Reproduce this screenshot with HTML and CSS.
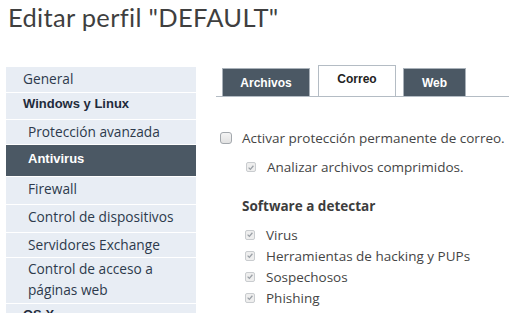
FILE: index.html
```html
<!DOCTYPE html>
<html lang="es">
<head>
<meta charset="utf-8">
<link rel="stylesheet" href="styles.css">
</head>
<body>
<h1 class="title">Editar perfil "DEFAULT"</h1>
<div class="layout">
  <nav class="side">
    <div class="item h25">General</div>
    <div class="item group h26">Windows y Linux</div>
    <div class="item sub h24">Protección avanzada</div>
    <div class="item sub active">Antivirus</div>
    <div class="item sub h27">Firewall</div>
    <div class="item sub h27">Control de dispositivos</div>
    <div class="item sub h24">Servidores Exchange</div>
    <div class="item sub two">Control de acceso a páginas web</div>
    <div class="item group h26">OS X</div>
  </nav>
  <main class="content">
    <div class="tabs">
      <div class="tab t1">Archivos</div>
      <div class="tab t2 on">Correo</div>
      <div class="tab t3">Web</div>
    </div>
    <div class="opts">
      <div class="row main"><span class="box"></span><span>Activar protección permanente de correo.</span></div>
      <div class="row nested"><span class="box dis"><svg viewBox="0 0 10 10"><path d="M2 5.2 L4.2 7.4 L8 2.8" fill="none" stroke="#9aa0a6" stroke-width="1.6"/></svg></span><span>Analizar archivos comprimidos.</span></div>
      <h2 class="head">Software a detectar</h2>
      <div class="list">
        <div class="row"><span class="box dis"><svg viewBox="0 0 10 10"><path d="M2 5.2 L4.2 7.4 L8 2.8" fill="none" stroke="#9aa0a6" stroke-width="1.6"/></svg></span><span>Virus</span></div>
        <div class="row"><span class="box dis"><svg viewBox="0 0 10 10"><path d="M2 5.2 L4.2 7.4 L8 2.8" fill="none" stroke="#9aa0a6" stroke-width="1.6"/></svg></span><span>Herramientas de hacking y PUPs</span></div>
        <div class="row"><span class="box dis"><svg viewBox="0 0 10 10"><path d="M2 5.2 L4.2 7.4 L8 2.8" fill="none" stroke="#9aa0a6" stroke-width="1.6"/></svg></span><span>Sospechosos</span></div>
        <div class="row"><span class="box dis"><svg viewBox="0 0 10 10"><path d="M2 5.2 L4.2 7.4 L8 2.8" fill="none" stroke="#9aa0a6" stroke-width="1.6"/></svg></span><span>Phishing</span></div>
      </div>
    </div>
  </main>
</div>
</body>
</html>
```
FILE: styles.css
```css
html, body { margin: 0; padding: 0; background: #fff; overflow: hidden; }
body { font-family: "Open Sans", "Liberation Sans", sans-serif; color: #444; }
.title {
  margin: 0;
  padding: 2px 0 0 8px;
  height: 65px;
  box-sizing: border-box;
  font-family: "Lato", "Liberation Sans", sans-serif;
  font-size: 25.5px;
  font-weight: 400;
  letter-spacing: 0.3px;
  color: #3f3f3f;
  line-height: 30px;
}
.layout { display: flex; align-items: flex-start; }
.side { width: 190px; margin-left: 6px; margin-top: 2px; display: flex; flex-direction: column; gap: 1px; }
.item {
  background: #e8edf4;
  color: #2d3a4c;
  font-size: 13.7px;
  line-height: 21px;
  padding: 0 12px 4px 17px;
  display: flex;
  align-items: center;
  box-sizing: border-box;
}
.h24 { height: 24px; padding-bottom: 2px; }
.h25 { height: 25px; padding-bottom: 3px; }
.h26 { height: 26px; }
.h27 { height: 27px; }
.item.group { font-family: "Liberation Sans", sans-serif; font-weight: bold; font-size: 13px; color: #1f2b3b; padding-bottom: 5px; }
.item.sub { padding-left: 22px; }
.item.active { background: #4b5864; color: #fff; font-family: "Liberation Sans", sans-serif; font-weight: bold; font-size: 13px; height: 31px; }
.item.two { height: 45px; padding-bottom: 3px; }
.content { flex: 1; margin-left: 20px; }
.tabs { display: flex; align-items: flex-end; gap: 8px; padding-left: 6px; height: 31px; border-bottom: 1px solid #b4bcc4; }
.tab {
  font-family: "Liberation Sans", sans-serif;
  font-weight: bold;
  font-size: 12px;
  text-align: center;
  box-sizing: border-box;
  background: #4b5864;
  color: #fff;
  border: 1px solid #a9b1b9;
  border-bottom: none;
  height: 28px;
  line-height: 29px;
}
.t1 { width: 88px; }
.t2 { width: 78px; }
.t3 { width: 63px; margin-left: -1px; }
.tab.on { background: #fff; color: #222; height: 31px; line-height: 26px; border-color: #b4bcc4; }
.opts { padding-top: 32px; }
.row { display: flex; align-items: center; font-size: 13.5px; color: #454545; }
.row.main { margin-left: 4px; gap: 10px; height: 17px; }
.row.nested { margin-left: 30px; gap: 11px; margin-top: 12px; }
.box {
  flex: none;
  width: 12px; height: 12px; box-sizing: border-box;
  border: 1px solid #a3a8ad; border-radius: 3px;
  background: linear-gradient(#f4f4f4, #e2e2e2);
  display: inline-flex; align-items: center; justify-content: center;
}
.box.dis { width: 10px; height: 10px; border-color: #c9cccf; background: #eeeeee; border-radius: 2px; }
.box svg { width: 9px; height: 9px; }
.head { font-family: "Open Sans", sans-serif; font-weight: 700; font-size: 13.5px; color: #3d3d3d; margin: 21px 0 0 26px; line-height: 18px; }
.list { margin: 11px 0 0 29px; display: flex; flex-direction: column; gap: 4px; }
.list .row { gap: 11px; height: 17px; }
```
